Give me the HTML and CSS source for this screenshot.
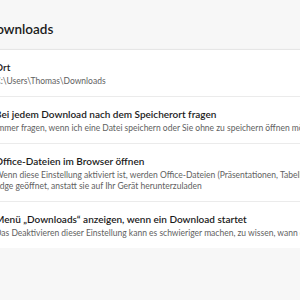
FILE: index.html
```html
<!DOCTYPE html>
<html lang="de">
<head>
  <meta charset="UTF-8" />
  <title>Downloads</title>
  <link rel="stylesheet" href="styles.css">
</head>
<body>
  <div class="page">
    <h1>Downloads</h1>
    <div class="card">
      <div class="row">
        <div class="title">Ort</div>
        <div class="sub">C:\Users\Thomas\Downloads</div>
      </div>
      <div class="row">
        <div class="title">Bei jedem Download nach dem Speicherort fragen</div>
        <div class="sub">Immer fragen, wenn ich eine Datei speichern oder Sie ohne zu speichern öffnen möchte</div>
      </div>
      <div class="row">
        <div class="title">Office-Dateien im Browser öffnen</div>
        <div class="sub">Wenn diese Einstellung aktiviert ist, werden Office-Dateien (Präsentationen, Tabellenkalkulationen und Dokumente) in Microsoft<br>Edge geöffnet, anstatt sie auf Ihr Gerät herunterzuladen</div>
      </div>
      <div class="row">
        <div class="title">Menü „Downloads“ anzeigen, wenn ein Download startet</div>
        <div class="sub">Das Deaktivieren dieser Einstellung kann es schwieriger machen, zu wissen, wann der Download begonnen hat</div>
      </div>
    </div>
  </div>
</body>
</html>
```

FILE: styles.css
```css
body {
  margin: 0;
  background: #f7f7f7;
  font-family: 'Lato', sans-serif;
  color: #1b1b1b;
  overflow: hidden;
}

.page {
  margin-left: -21px;
  width: 700px;
}

h1 {
  margin: 0;
  padding: 21px 0 12px 7px;
  font-size: 13.5px;
  font-weight: 600;
  line-height: 16px;
}

.card {
  background: #fff;
  border-top: 1px solid #e6e6e6;
  box-shadow: 0 2px 4px rgba(0, 0, 0, 0.08);
}

.row {
  padding: 10px 16px 9px;
  border-bottom: 1px solid #ebebeb;
}

.row:last-child {
  border-bottom: none;
}

.title {
  font-size: 10px;
  font-weight: 600;
  line-height: 14px;
  margin-bottom: 2px;
}

.sub {
  font-size: 8.5px;
  line-height: 11px;
  color: #616161;
}
```
